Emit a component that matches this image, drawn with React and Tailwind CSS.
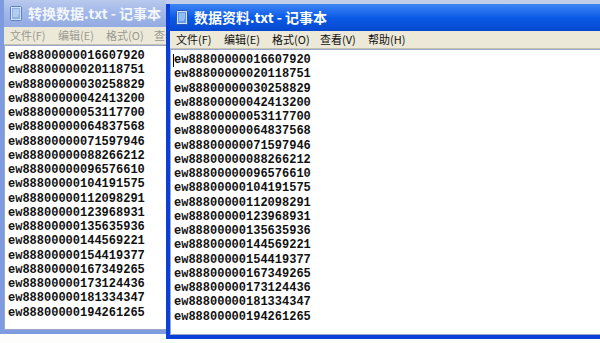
import React from 'react';

const LINES = [
  'ew88800000016607920',
  'ew88800000020118751',
  'ew88800000030258829',
  'ew88800000042413200',
  'ew88800000053117700',
  'ew88800000064837568',
  'ew88800000071597946',
  'ew88800000088266212',
  'ew88800000096576610',
  'ew88800000104191575',
  'ew88800000112098291',
  'ew88800000123968931',
  'ew88800000135635936',
  'ew88800000144569221',
  'ew88800000154419377',
  'ew88800000167349265',
  'ew88800000173124436',
  'ew88800000181334347',
  'ew88800000194261265',
];

const MENU = ['文件(F)', '编辑(E)', '格式(O)', '查看(V)', '帮助(H)'];

function NoteIcon({ dim }) {
  return (
    <svg width="14" height="17" viewBox="0 0 14 17" className="shrink-0">
      <rect x="1.5" y="1.5" width="11" height="14" rx="1" fill={dim ? '#d6e4f7' : '#cfe3fb'} stroke={dim ? '#5b7fc4' : '#2b55b5'} />
      <rect x="3" y="3" width="8" height="11" fill={dim ? '#8fb2e4' : '#5f9ae8'} />
      <path d="M4 5h6M4 7h6M4 9h6M4 11h5" stroke="#e8f2ff" strokeWidth="0.8" />
    </svg>
  );
}

function Notepad({ title, active, lines, cursor, menu }) {
  return (
    <div className={`flex flex-col w-full h-full border-l-4 border-b-4 overflow-hidden ${active ? 'border-[#0a3fd8]' : 'border-[#7f9be0]'}`}>
      <div
        className={`h-[27px] shrink-0 flex items-center gap-[5px] pl-[5px] ${
          active
            ? 'bg-gradient-to-b from-[#3d86f5] via-[#0a5ae6] to-[#0748d0]'
            : 'bg-gradient-to-b from-[#b9c9ee] via-[#a0b6e8] to-[#93abe2]'
        }`}
      >
        <NoteIcon dim={!active} />
        <span
          className={`text-[14px] font-bold whitespace-nowrap ${active ? 'text-white' : 'text-[#f3f6fd]'}`}
          style={{ fontFamily: '"Noto Sans CJK SC", sans-serif' }}
        >
          {title}
        </span>
      </div>
      <div
        className={`h-[18px] shrink-0 flex items-center overflow-hidden bg-[#ece9d8] border-b border-[#c5c2b2] pl-[6px] text-[11px] whitespace-nowrap ${
          active ? 'text-[#111]' : 'text-[#9a9a92]'
        }`}
        style={{ fontFamily: '"Noto Sans CJK SC", sans-serif' }}
      >
        {menu.map(m => (
          <span key={m} className="w-[48px] shrink-0">{m}</span>
        ))}
      </div>
      <div className="flex-1 bg-white border border-[#9aa9c9] pt-[3px] pl-[3px] overflow-hidden">
        {lines.map((l, i) => (
          <div
            key={i}
            className="h-[14.25px] leading-[14.25px] text-[12px] font-bold text-[#111] whitespace-nowrap relative"
            style={{ fontFamily: '"Liberation Mono", monospace' }}
          >
            {cursor && i === 0 && <span className="absolute left-[-1px] top-[1px] w-px h-[13px] bg-black" />}
            {l}
          </div>
        ))}
      </div>
    </div>
  );
}

export default function App() {
  return (
    <div className="relative w-[600px] h-[343px] overflow-hidden bg-[#fdfdfb]">
      <div className="absolute left-0 top-0 w-[167px] h-[334px]">
        <Notepad title="转换数据.txt - 记事本" active={false} lines={LINES} menu={MENU.slice(0, 4)} />
      </div>
      <div className="absolute left-[166px] top-0 w-[440px] h-[4px] bg-[#c3cfe9]" />
      <div className="absolute left-[166px] top-[4px] w-[440px] h-[335px]">
        <Notepad title="数据资料.txt - 记事本" active lines={LINES} cursor menu={MENU} />
      </div>
    </div>
  );
}
